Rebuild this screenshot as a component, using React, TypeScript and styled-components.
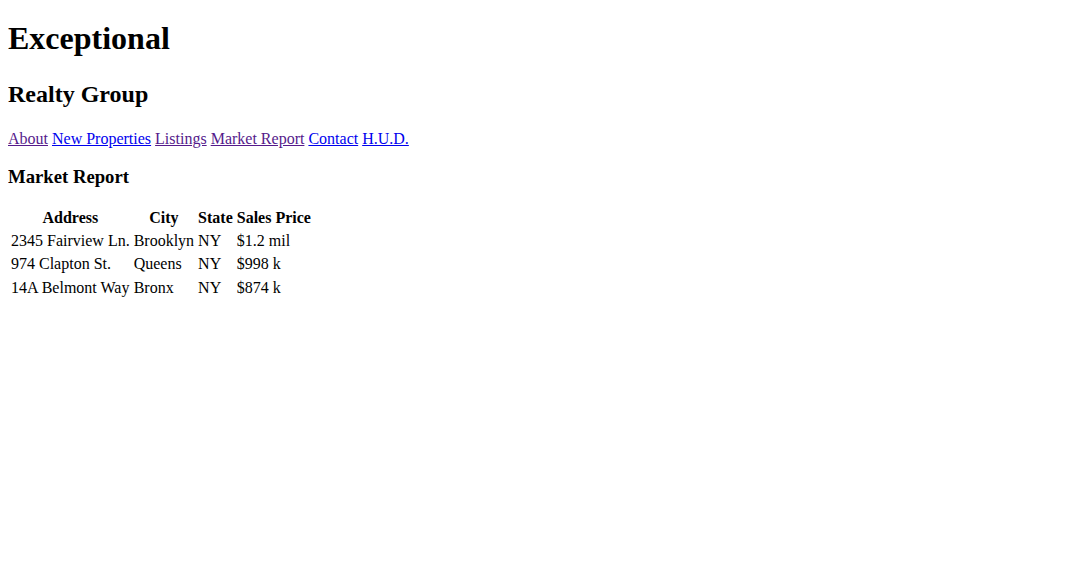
import React from "react";
import styled, { createGlobalStyle } from "styled-components";

const Global = createGlobalStyle`
  body {
    margin: 8px;
    font-family: "Liberation Serif", "Times New Roman", serif;
    font-size: 16px;
    color: #000;
    background: #fff;
  }
`;

const Title = styled.h1`
  font-size: 32px;
  font-weight: bold;
  margin: 11.5px 0 24.5px;
`;

const Subtitle = styled.h2`
  font-size: 24px;
  font-weight: bold;
  margin: 19.92px 0 22px;
`;

const Nav = styled.p`
  margin: 16px 0;
`;

const NavLink = styled.a<{ $visited?: boolean }>`
  color: ${(p) => (p.$visited ? "#551a8b" : "#0000ee")};
  text-decoration: underline;
  cursor: pointer;
`;

const SectionTitle = styled.h3`
  font-size: 18.72px;
  font-weight: bold;
  margin: 17.5px 0 17.2px;
`;

const Table = styled.table`
  border-collapse: separate;
  border-spacing: 2px;
`;

const Th = styled.th`
  padding: 1px;
  font-weight: bold;
  text-align: center;
  line-height: 19.3px;
`;

const Td = styled.td`
  padding: 1px;
  text-align: left;
  line-height: 19.3px;
`;

const links: { label: string; visited: boolean }[] = [
  { label: "About", visited: true },
  { label: "New Properties", visited: false },
  { label: "Listings", visited: true },
  { label: "Market Report", visited: true },
  { label: "Contact", visited: false },
  { label: "H.U.D.", visited: false },
];

const rows = [
  ["2345 Fairview Ln.", "Brooklyn", "NY", "$1.2 mil"],
  ["974 Clapton St.", "Queens", "NY", "$998 k"],
  ["14A Belmont Way", "Bronx", "NY", "$874 k"],
];

export default function App() {
  return (
    <>
      <Global />
      <Title>Exceptional</Title>
      <Subtitle>Realty Group</Subtitle>
      <Nav>
        {links.map((l, i) => (
          <React.Fragment key={l.label}>
            <NavLink href="#" $visited={l.visited}>
              {l.label}
            </NavLink>
            {i < links.length - 1 ? " " : null}
          </React.Fragment>
        ))}
      </Nav>
      <SectionTitle>Market Report</SectionTitle>
      <Table>
        <thead>
          <tr>
            <Th>Address</Th>
            <Th>City</Th>
            <Th>State</Th>
            <Th>Sales Price</Th>
          </tr>
        </thead>
        <tbody>
          {rows.map((r) => (
            <tr key={r[0]}>
              {r.map((c, j) => (
                <Td key={j}>{c}</Td>
              ))}
            </tr>
          ))}
        </tbody>
      </Table>
    </>
  );
}
